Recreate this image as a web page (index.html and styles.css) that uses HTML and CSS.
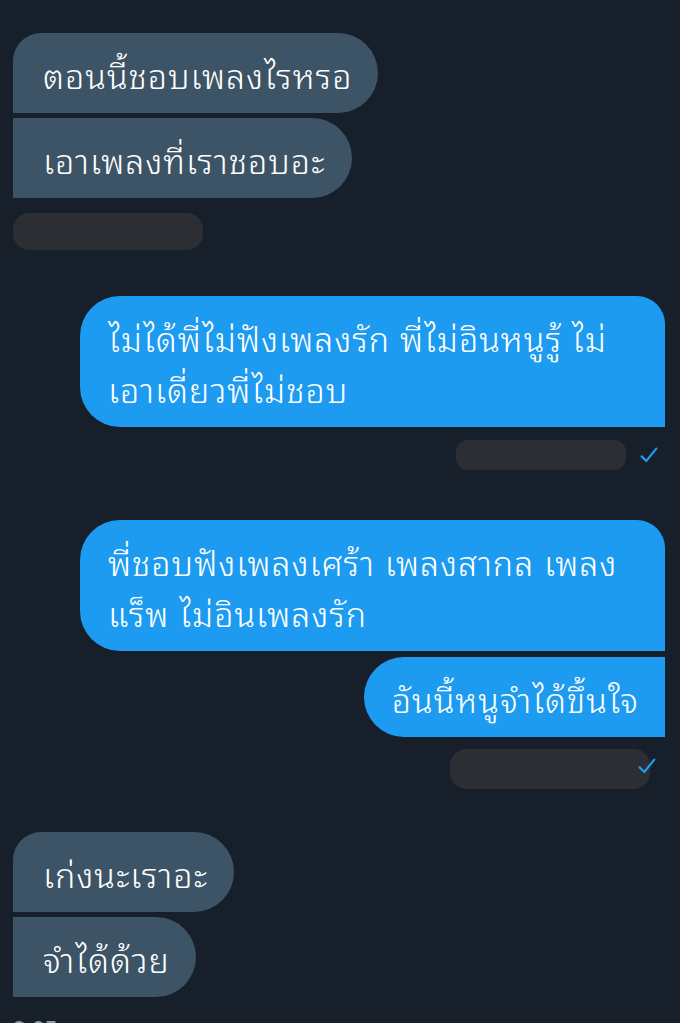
FILE: index.html
```html
<!DOCTYPE html>
<html lang="th">
<head>
<meta charset="UTF-8" />
<meta name="viewport" content="width=device-width, initial-scale=1" />
<title>Chat</title>
<link rel="stylesheet" href="styles.css">
</head>
<body>
  <div class="chat">

    <div class="group in first">
      <div class="bubble top">ตอนนี้ชอบเพลงไรหรอ</div>
      <div class="bubble mid">เอาเพลงที่เราชอบอะ</div>
      <div class="meta"><span class="blur in-blur"></span></div>
    </div>

    <div class="group out">
      <div class="bubble top bottom">ไม่ได้พี่ไม่ฟังเพลงรัก พี่ไม่อินหนูรู้ ไม่ เอาเดี่ยวพี่ไม่ชอบ</div>
      <div class="meta">
        <span class="blur out-blur"></span>
        <svg class="tick" viewBox="0 0 24 24" width="22" height="22"><path d="M4 13.5l5 5L20 5" fill="none" stroke="#1d9bf0" stroke-width="2.4" stroke-linecap="round" stroke-linejoin="round"/></svg>
      </div>
    </div>

    <div class="group out second">
      <div class="bubble top">พี่ชอบฟังเพลงเศร้า เพลงสากล เพลง แร็พ ไม่อินเพลงรัก</div>
      <div class="bubble mid">อันนี้หนูจำได้ขึ้นใจ</div>
      <div class="meta covered">
        <svg class="tick under" viewBox="0 0 24 24" width="22" height="22"><path d="M4 13.5l5 5L20 5" fill="none" stroke="#1d9bf0" stroke-width="2.4" stroke-linecap="round" stroke-linejoin="round"/></svg>
        <span class="blur out-blur wide"></span>
      </div>
    </div>

    <div class="group in">
      <div class="bubble top">เก่งนะเราอะ</div>
      <div class="bubble mid">จำได้ด้วย</div>
      <div class="time">9:05</div>
    </div>

  </div>
</body>
</html>
```

FILE: styles.css
```css
html, body {
  margin: 0;
  padding: 0;
  background: #17202a;
  font-family: "Noto Sans Thai Looped", "Noto Sans Thai", "Noto Sans", "Liberation Sans", sans-serif;
  overflow: hidden;
}
.chat {
  display: flex;
  flex-direction: column;
  padding: 33px 15px 0 13px;
}
.group {
  display: flex;
  flex-direction: column;
  gap: 5px;
}
.group.in {
  align-items: flex-start;
  margin-top: 43px;
}
.group.in.first {
  margin-top: 0;
}
.group.out {
  align-items: flex-end;
  margin-top: 46px;
}
.group.out.second {
  margin-top: 50px;
}
.bubble {
  color: #fff;
  font-size: 34px;
  font-weight: 300;
  letter-spacing: 1px;
  line-height: 51px;
  padding: 14.5px 26px 14.5px 30px;
  max-width: 531px;
}
.in .bubble {
  background: #3d5466;
  border-radius: 0 40px 40px 0;
}
.in .bubble.top {
  border-top-left-radius: 28px;
}
.out .bubble {
  background: #1d9bf0;
  border-radius: 40px 0 0 40px;
  padding-left: 28px;
}
.out .bubble.top {
  border-top-right-radius: 28px;
}
.out .bubble.top.bottom {
  border-radius: 40px 28px 0 40px;
}
.out .bubble.mid {
  margin-top: 1px;
}
.meta {
  display: flex;
  align-items: center;
  gap: 12px;
  margin-top: 8px;
}
.blur {
  display: block;
  background: #2b2e32;
  border-radius: 16px;
}
.in-blur {
  width: 190px;
  height: 37px;
  margin-top: 2px;
}
.out-blur {
  width: 170px;
  height: 30px;
  border-radius: 12px;
}
.tick {
  margin-right: 5px;
}
.covered {
  position: relative;
  margin-top: 7px;
}
.out-blur.wide {
  width: 200px;
  height: 40px;
  border-radius: 16px;
  margin-right: 15px;
}
.tick.under {
  position: absolute;
  right: 2px;
  top: 6px;
}
.time {
  margin-top: 6px;
  color: #8b98a5;
  font-size: 22px;
  font-weight: bold;
}
```
